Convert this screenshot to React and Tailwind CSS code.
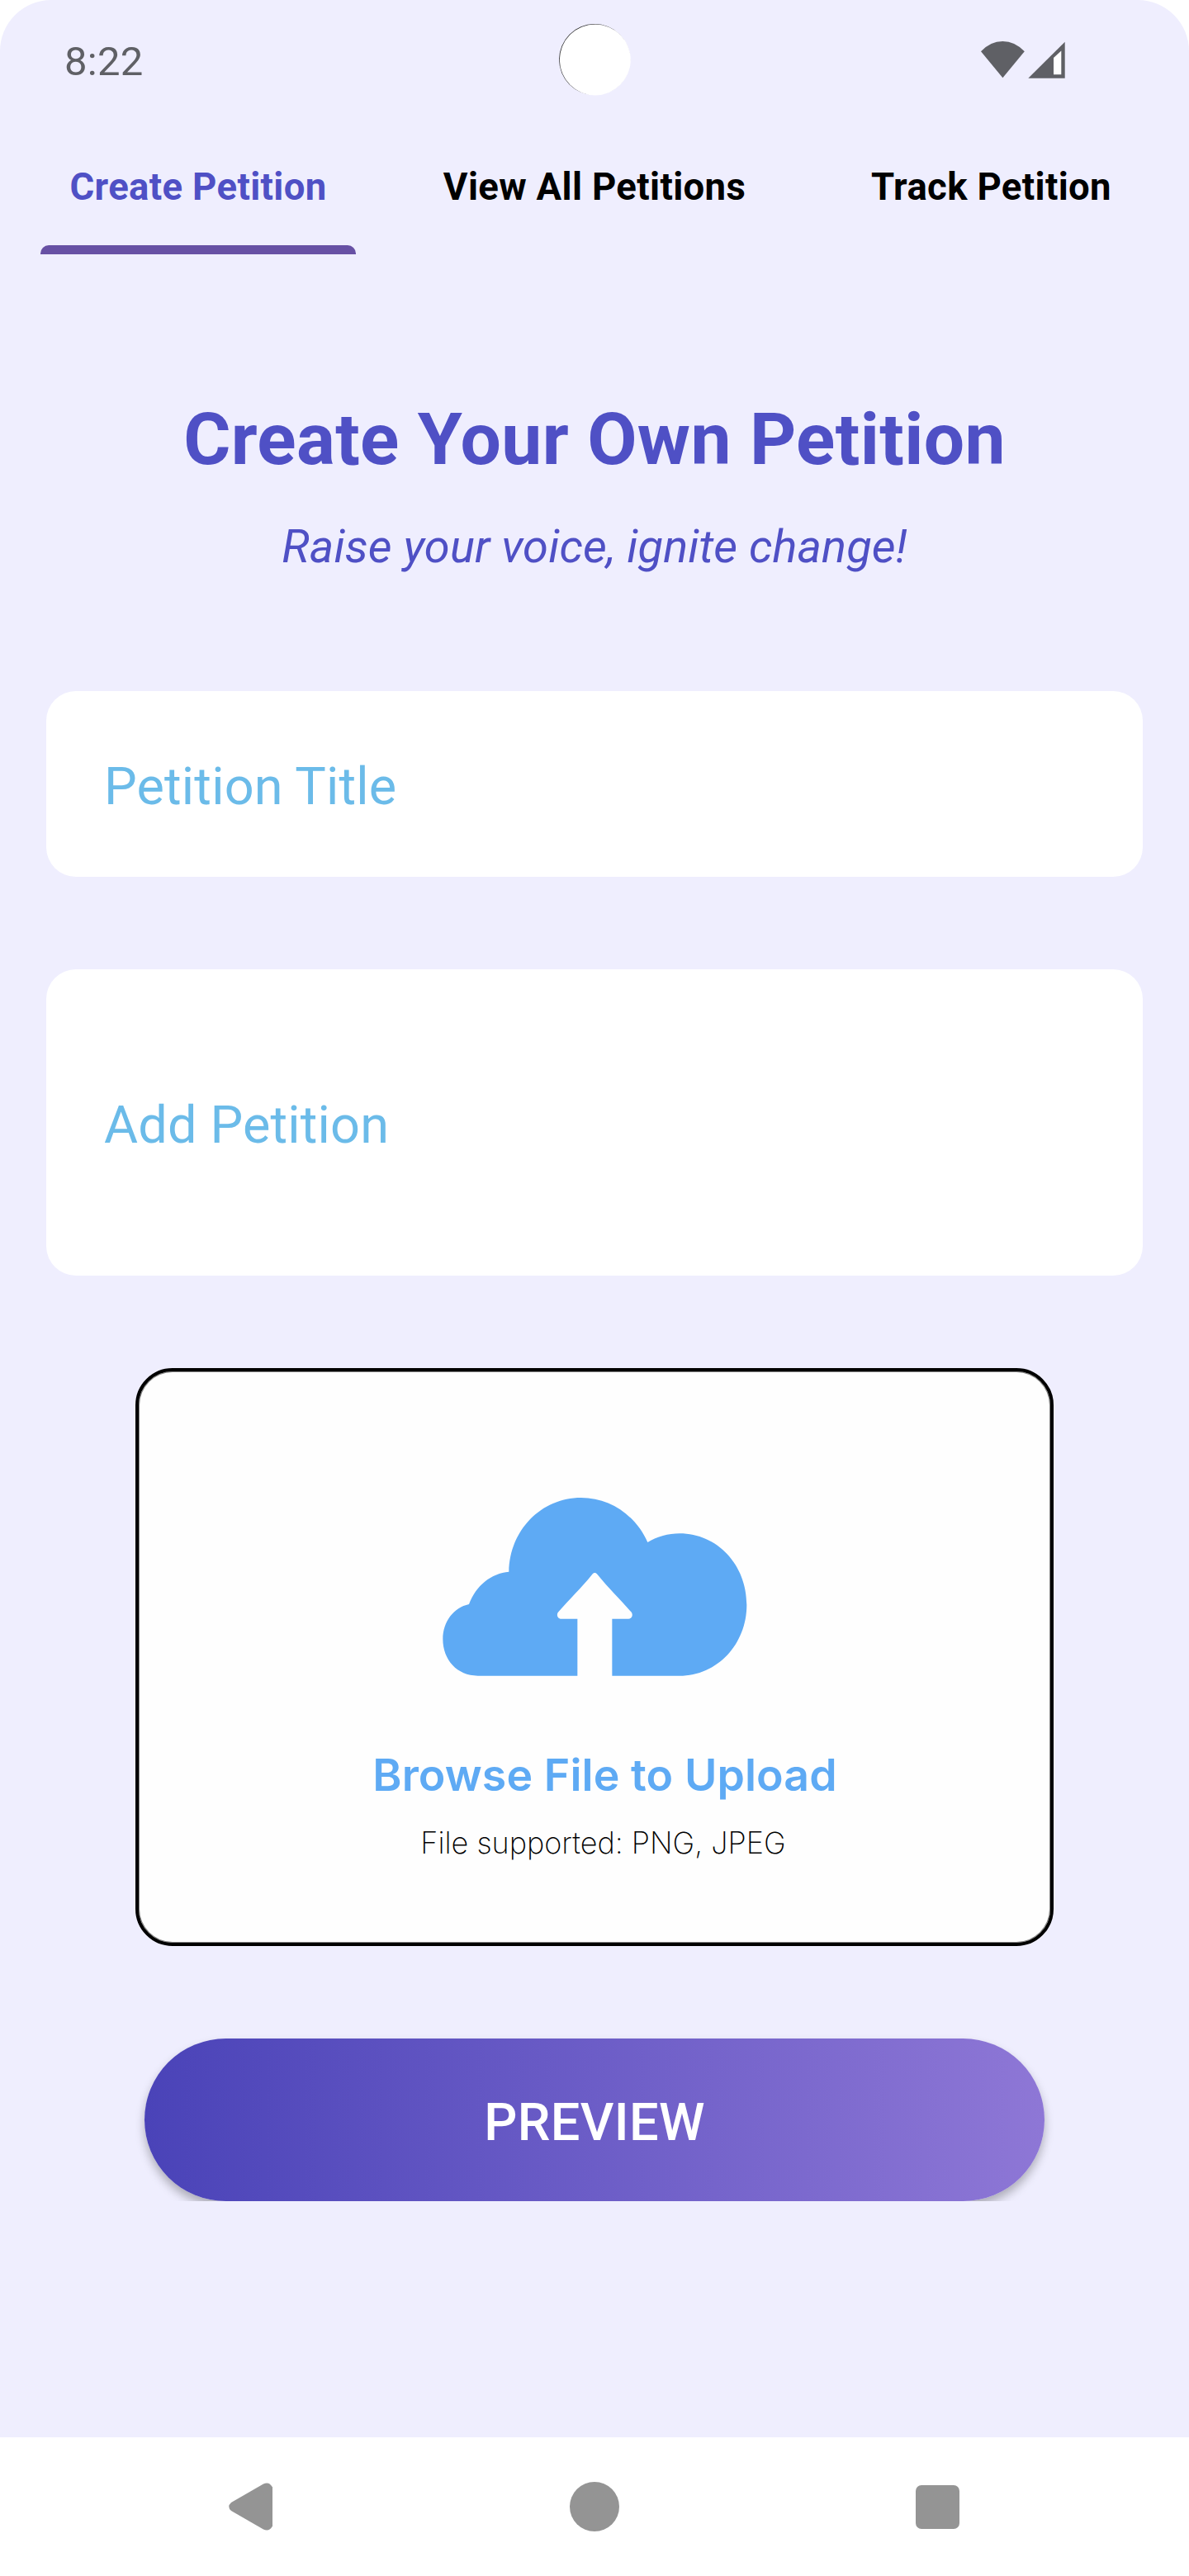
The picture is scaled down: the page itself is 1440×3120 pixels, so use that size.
import React from "react";

const tabs = [
  { label: "Create Petition", cls: "w-[382px] text-[#4f50c5]", active: true },
  { label: "View All Petitions", cls: "w-[578px] text-black" },
  { label: "Track Petition", cls: "w-[383px] text-black" },
];

function StatusBar() {
  return (
    <div className="flex h-[146px] items-start pl-[78px]">
      <div className="w-[599px] pt-[46px] text-[49px] leading-[57px] tracking-[0.3px] text-[#5f6065]">8:22</div>
      <svg className="mt-[29px] h-[87px] w-[87px] shrink-0" viewBox="0 0 87 87">
        <circle cx="43.1" cy="43.1" r="43" fill="#222" />
        <circle cx="43.8" cy="43.4" r="43" fill="#fff" />
      </svg>
      <svg className="mt-[50px] ml-[424px] h-[45px] w-[102px] shrink-0" viewBox="1188 50 102 45" fill="#5f6065">
        <path d="M1188 62.3Q1199.500 50 1214.300 50T1240.800 62.300L1214.400 94.300Z" />
        <path d="M1245.300 94.700L1289.700 50.800V94.700Z" />
        <path d="M1276 70V90.300H1285.300V61.500Z" fill="#fff" />
      </svg>
    </div>
  );
}

function CloudIcon() {
  return (
    <svg className="h-[216px] w-[369px]" viewBox="107 101 1107 648">
      <path
        fill="#5eaaf4"
        d="M235 748C160 748 108 690 108 615C108 550 148 500 203 488C228 420 285 375 348 370C350 220 465 101 610 101C717 101 810 167 852 263C887 242 927 231 968 231C1105 231 1212 345 1212 490C1212 633 1105 748 968 748H723V541H782C795 541 801 526 792 516C745 461 715 436 669 379C664 372 656 372 651 379C605 436 575 461 528 516C519 526 525 541 538 541H597V748Z"
      />
    </svg>
  );
}

export default function App() {
  return (
    <div className="h-[3120px] w-[1440px] overflow-hidden bg-white font-['Roboto',sans-serif]">
      <div className="flex h-[2952px] flex-col rounded-t-[62px] bg-[#efeefe]">
        <StatusBar />
        <nav className="flex h-[162px] pl-[49px]">
          {tabs.map((t) => (
            <div key={t.label} className="flex flex-col">
              <div className={`${t.cls} flex h-[151px] items-center justify-center pt-[11px] text-[45.5px] font-bold tracking-[0.35px] whitespace-nowrap`}>
                {t.label}
              </div>
              {t.active && <div className="h-[11px] rounded-t-[10px] bg-[#6750a4]" />}
            </div>
          ))}
        </nav>
        <h1 className="mt-[172px] text-center text-[87.5px] leading-[104px] font-bold tracking-[0.35px] text-[#4f50c5]">
          Create Your Own Petition
        </h1>
        <p className="mt-[45px] text-center text-[56px] leading-[66px] tracking-[0.06px] text-[#4f50c5] italic">
          Raise your voice, ignite change!
        </p>
        <div className="mx-[56px] mt-[142px] flex h-[225px] items-center rounded-[36px] bg-white px-[70px] pt-[7px] text-[63px] tracking-[0.17px] text-[#6bbbe9]">
          Petition Title
        </div>
        <div className="mx-[56px] mt-[112px] flex h-[371px] items-center rounded-[36px] bg-white px-[70px] pt-[7px] text-[63px] tracking-[0.17px] text-[#6bbbe9]">
          Add Petition
        </div>
        <div className="mx-[164px] mt-[112px] flex h-[700px] flex-col items-center rounded-[45px] border-4 border-black bg-[#fefefe] pt-[153px] font-['Inter',sans-serif] shadow-[inset_0_0_0_1px_#808080]">
          <CloudIcon />
          <div className="mt-[88px] pl-[25px] text-[53.6px] leading-[64px] font-semibold tracking-[0.1px] whitespace-nowrap text-[#5eaaf4]">
            Browse File to Upload
          </div>
          <div className="mt-[28px] pl-[21px] text-[36px] leading-[44px] font-extralight whitespace-nowrap text-black">
            File supported: PNG, JPEG
          </div>
        </div>
        <div className="mt-[92px] flex h-[217px] justify-center overflow-hidden pt-[20px]">
          <button className="h-[197px] w-[1090px] rounded-full bg-linear-to-r/srgb from-[#4a43b8] to-[#8e77d6] pt-[7px] text-[63px] font-medium tracking-[0.37px] text-white shadow-[0_7px_12px_rgba(0,0,0,0.28)]">
            PREVIEW
          </button>
        </div>
      </div>
      <div className="flex h-[168px] items-center justify-between pl-[277px] pr-[278px]">
        <svg className="h-[60px] w-[54px]" viewBox="0 0 54 60" fill="#949494">
          <path d="M3 25L42 2.500Q49-1 53 6.500V53.500Q49 61 42 57.500L3 35Q-2.500 30 3 25Z" />
        </svg>
        <div className="size-[60px] rounded-full bg-[#949494]" />
        <div className="size-[53px] rounded-[7px] bg-[#949494]" />
      </div>
    </div>
  );
}
